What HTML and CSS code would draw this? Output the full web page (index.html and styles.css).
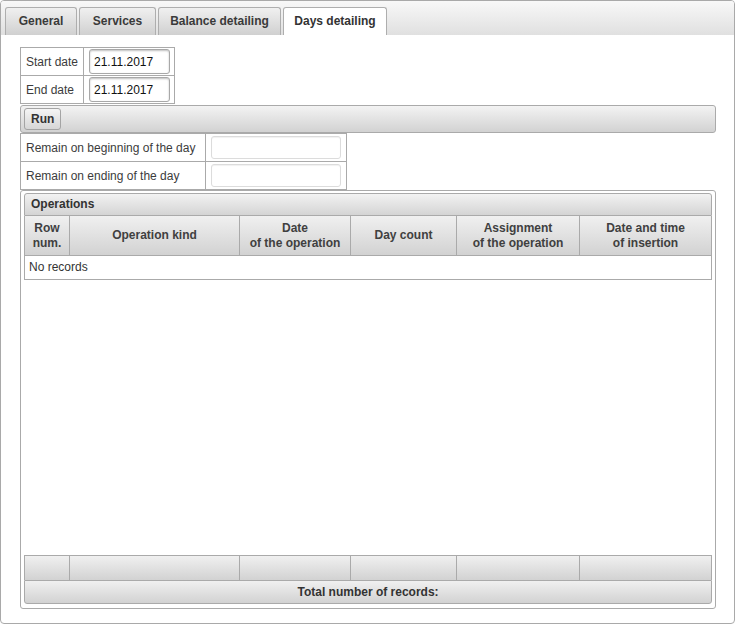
FILE: index.html
```html
<!DOCTYPE html>
<html>
<head>
<meta charset="utf-8">
<link rel="stylesheet" href="styles.css">
</head>
<body>
<div class="window">
  <div class="tabbar">
    <div class="tab t-general">General</div>
    <div class="tab t-services">Services</div>
    <div class="tab t-balance">Balance detailing</div>
    <div class="tab t-days active">Days detailing</div>
  </div>
  <div class="content">
    <div class="fields dates">
      <div class="cell label">Start date</div>
      <div class="cell"><input class="field" type="text" value="21.11.2017"></div>
      <div class="cell label">End date</div>
      <div class="cell"><input class="field" type="text" value="21.11.2017"></div>
    </div>
    <div class="toolbar">
      <button class="btn">Run</button>
    </div>
    <div class="fields remain">
      <div class="cell label">Remain on beginning of the day</div>
      <div class="cell"><input class="field light" type="text" value=""></div>
      <div class="cell label">Remain on ending of the day</div>
      <div class="cell"><input class="field light" type="text" value=""></div>
    </div>
    <div class="panel">
      <div class="panel-title">Operations</div>
      <div class="grid head">
        <div class="hcell">Row<br>num.</div>
        <div class="hcell">Operation kind</div>
        <div class="hcell">Date<br>of the operation</div>
        <div class="hcell">Day count</div>
        <div class="hcell">Assignment<br>of the operation</div>
        <div class="hcell">Date and time<br>of insertion</div>
      </div>
      <div class="norecords">No records</div>
      <div class="spacer"></div>
      <div class="grid foot">
        <div class="hcell"></div>
        <div class="hcell"></div>
        <div class="hcell"></div>
        <div class="hcell"></div>
        <div class="hcell"></div>
        <div class="hcell"></div>
      </div>
      <div class="total">Total number of records:</div>
    </div>
  </div>
</div>
</body>
</html>
```

FILE: styles.css
```css
html, body {
  margin: 0;
  padding: 0;
  background: #fff;
}
body {
  font-family: "Liberation Sans", Arial, sans-serif;
  font-size: 12px;
  color: #333;
}
.window {
  width: 735px;
  height: 624px;
  box-sizing: border-box;
  border: 1px solid #a9a9a9;
  border-radius: 4px;
  display: flex;
  flex-direction: column;
  overflow: hidden;
}
.tabbar {
  height: 34px;
  flex: none;
  background: linear-gradient(#f8f8f8, #e0e0e0);
  display: flex;
  align-items: flex-end;
  padding-left: 4px;
  gap: 2px;
}
.tab {
  box-sizing: border-box;
  height: 28px;
  line-height: 27px;
  text-align: center;
  border: 1px solid #aeaeae;
  border-bottom: 0;
  border-radius: 3px 3px 0 0;
  background: linear-gradient(#f0f0f0, #d0d0d0);
  font-weight: bold;
  color: #3a3a3a;
  white-space: nowrap;
}
.t-general { width: 72px; }
.t-services { width: 77px; }
.t-balance { width: 123px; }
.t-days { width: 104px; }
.tab.active {
  background: #fff;
  color: #333;
}
.content {
  padding: 12px 18px 0 19px;
}
.fields {
  display: grid;
  width: max-content;
  border-top: 1px solid #aaa;
  border-left: 1px solid #aaa;
}
.fields .cell {
  box-sizing: border-box;
  border-right: 1px solid #aaa;
  border-bottom: 1px solid #aaa;
  height: 28px;
  display: flex;
  align-items: center;
}
.fields .label {
  padding-left: 5px;
  color: #3c3c3c;
  white-space: nowrap;
}
.dates {
  grid-template-columns: 63px 91px;
}
.dates .cell:nth-child(2n) {
  padding-left: 5px;
}
.remain {
  grid-template-columns: 185px 141px;
}
.remain .cell:nth-child(2n) {
  padding-left: 5px;
}
.field {
  box-sizing: border-box;
  width: 81px;
  height: 25px;
  margin: 0;
  padding: 0 4px;
  border: 1px solid #a8a8a8;
  border-radius: 3px;
  box-shadow: inset 0 1px 2px rgba(0, 0, 0, 0.25);
  font-family: "Liberation Sans", Arial, sans-serif;
  font-size: 12px;
  color: #111;
  background: #fff;
}
.field.light {
  width: 130px;
  height: 23px;
  border: 1px solid #dcdcdc;
  box-shadow: inset 0 1px 1px rgba(0, 0, 0, 0.06);
}
.toolbar {
  width: 696px;
  box-sizing: border-box;
  height: 28px;
  margin-top: 1px;
  border: 1px solid #aaa;
  border-radius: 3px;
  background: linear-gradient(#f3f3f3, #d2d2d2);
  padding: 0 3px;
  display: flex;
  align-items: center;
}
.btn {
  height: 22px;
  margin: 0;
  padding: 0 6px;
  border: 1px solid #a4a4a4;
  border-radius: 3px;
  background: linear-gradient(#f5f5f5, #d6d6d6);
  font-family: "Liberation Sans", Arial, sans-serif;
  font-size: 12px;
  font-weight: bold;
  color: #333;
}
.panel {
  width: 696px;
  height: 419px;
  box-sizing: border-box;
  border: 1px solid #aaa;
  border-radius: 3px;
  padding: 2px 3px 4px 3px;
  display: flex;
  flex-direction: column;
}
.panel-title {
  height: 21px;
  line-height: 21px;
  border: 1px solid #aaa;
  border-radius: 3px 3px 0 0;
  background: linear-gradient(#f2f2f2, #d4d4d4);
  font-weight: bold;
  padding-left: 6px;
  color: #333;
}
.grid {
  display: grid;
  grid-template-columns: 45px 170px 111px 106px 123px 132px;
  border-left: 1px solid #aaa;
}
.hcell {
  box-sizing: border-box;
  border-right: 1px solid #aaa;
  background: linear-gradient(#f0f0f0, #d2d2d2);
  font-weight: bold;
  color: #404040;
  text-align: center;
  display: flex;
  align-items: center;
  justify-content: center;
  line-height: 15px;
}
.head .hcell {
  height: 40px;
  border-bottom: 1px solid #aaa;
}
.norecords {
  height: 23px;
  line-height: 23px;
  border: 1px solid #aaa;
  border-top: 0;
  padding-left: 4px;
  color: #333;
}
.spacer {
  flex: 1;
}
.foot {
  border-top: 1px solid #aaa;
}
.foot .hcell {
  height: 24px;
}
.total {
  height: 22px;
  line-height: 22px;
  border: 1px solid #aaa;
  border-radius: 0 0 3px 3px;
  background: linear-gradient(#f0f0f0, #d2d2d2);
  font-weight: bold;
  text-align: center;
  color: #333;
}
```
